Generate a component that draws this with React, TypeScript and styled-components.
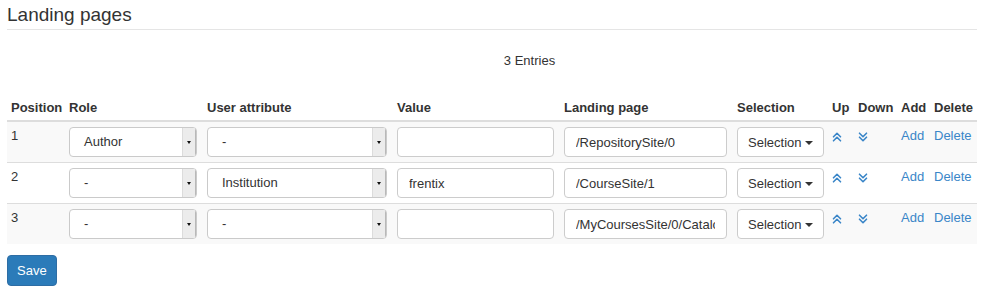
import React from "react";
import styled, { createGlobalStyle } from "styled-components";

type Entry = {
  position: number;
  role: string;
  attribute: string;
  value: string;
  landingPage: string;
};

const entries: Entry[] = [
  { position: 1, role: "Author", attribute: "-", value: "", landingPage: "/RepositorySite/0" },
  { position: 2, role: "-", attribute: "Institution", value: "frentix", landingPage: "/CourseSite/1" },
  { position: 3, role: "-", attribute: "-", value: "", landingPage: "/MyCoursesSite/0/Catalog" },
];

const columns = [
  { label: "Position", width: 58 },
  { label: "Role", width: 138 },
  { label: "User attribute", width: 190 },
  { label: "Value", width: 167 },
  { label: "Landing page", width: 173 },
  { label: "Selection", width: 95 },
  { label: "Up", width: 26 },
  { label: "Down", width: 43 },
  { label: "Add", width: 33 },
  { label: "Delete", width: 47 },
];

const DoubleChevron: React.FC<{ up?: boolean }> = ({ up }) => (
  <svg width="10" height="10" viewBox="0 0 10 10" fill="none">
    <g
      stroke="currentColor"
      strokeWidth="1.6"
      strokeLinecap="round"
      strokeLinejoin="round"
      transform={up ? undefined : "rotate(180 5 5)"}
    >
      <polyline points="1.5,4.8 5,1.3 8.5,4.8" />
      <polyline points="1.5,8.8 5,5.3 8.5,8.8" />
    </g>
  </svg>
);

const App: React.FC = () => {
  return (
    <Page>
      <GlobalStyle />
      <Title>Landing pages</Title>
      <EntryCount>3 Entries</EntryCount>
      <Table>
        <colgroup>
          {columns.map((c) => (
            <col key={c.label} style={{ width: c.width }} />
          ))}
        </colgroup>
        <thead>
          <tr>
            {columns.map((c) => (
              <Th key={c.label}>{c.label}</Th>
            ))}
          </tr>
        </thead>
        <tbody>
          {entries.map((e, i) => (
            <Row key={e.position} $striped={i % 2 === 0}>
              <Td>{e.position}</Td>
              <Td>
                <FakeSelect>
                  <SelectText>{e.role}</SelectText>
                  <SelectArrow />
                </FakeSelect>
              </Td>
              <Td>
                <FakeSelect>
                  <SelectText>{e.attribute}</SelectText>
                  <SelectArrow />
                </FakeSelect>
              </Td>
              <Td>
                <TextInput type="text" defaultValue={e.value} />
              </Td>
              <Td>
                <TextInput type="text" defaultValue={e.landingPage} />
              </Td>
              <Td>
                <DropButton type="button">
                  Selection
                  <Caret />
                </DropButton>
              </Td>
              <Td>
                <IconLink href="#">
                  <DoubleChevron up />
                </IconLink>
              </Td>
              <Td>
                <IconLink href="#">
                  <DoubleChevron />
                </IconLink>
              </Td>
              <Td>
                <Link href="#">Add</Link>
              </Td>
              <Td>
                <Link href="#">Delete</Link>
              </Td>
            </Row>
          ))}
        </tbody>
      </Table>
      <SaveButton type="button">Save</SaveButton>
    </Page>
  );
};

export default App;

const GlobalStyle = createGlobalStyle`
  body {
    margin: 0;
    background: #fff;
    font-family: "Liberation Sans", Arial, Helvetica, sans-serif;
    font-size: 13px;
    line-height: 1.42857;
    color: #333;
  }
  * { box-sizing: border-box; }
`;

const Page = styled.div`
  width: 995px;
  padding: 0 18px 0 7px;
`;

const Title = styled.h3`
  margin: 0;
  padding: 5px 0 3px;
  font-size: 19px;
  font-weight: normal;
  line-height: 1.1;
  color: #333;
  border-bottom: 1px solid #e5e5e5;
`;

const EntryCount = styled.div`
  margin-top: 22px;
  padding-left: 75px;
  text-align: center;
`;

const Table = styled.table`
  margin-top: 22px;
  width: 970px;
  table-layout: fixed;
  border-collapse: collapse;
  border-spacing: 0;
`;

const Th = styled.th`
  padding: 7px 4px 2px;
  text-align: left;
  vertical-align: bottom;
  font-weight: bold;
  white-space: nowrap;
  border-bottom: 2px solid #ddd;
`;

const Row = styled.tr<{ $striped: boolean }>`
  background: ${({ $striped }) => ($striped ? "#f9f9f9" : "#fff")};
`;

const Td = styled.td`
  padding: 5px 4px;
  vertical-align: top;
  border-top: 1px solid #ddd;
  white-space: nowrap;
`;

const FakeSelect = styled.div`
  display: flex;
  width: calc(100% - 2px);
  height: 30px;
  border: 1px solid #cacaca;
  border-radius: 4px;
  background: #fff;
  overflow: hidden;
`;

const SelectText = styled.span`
  flex: 1;
  padding-left: 14px;
  line-height: 28px;
  color: #333;
`;

const SelectArrow = styled.span`
  position: relative;
  width: 14px;
  background: #ececec;
  border-left: 1px solid #dcdcdc;
  border-right: 1px solid #b8b8b8;

  &::after {
    content: "";
    position: absolute;
    left: 4px;
    top: 13px;
    border-left: 2.5px solid transparent;
    border-right: 2.5px solid transparent;
    border-top: 3px solid #111;
  }
`;

const TextInput = styled.input`
  display: block;
  width: calc(100% - 2px);
  height: 30px;
  padding: 0 11px;
  border: 1px solid #ccc;
  border-radius: 4px;
  font-family: inherit;
  font-size: 13px;
  color: #333;
  background: #fff;
  outline: none;
`;

const DropButton = styled.button`
  display: inline-flex;
  align-items: center;
  height: 30px;
  padding: 0 10px;
  border: 1px solid #ccc;
  border-radius: 4px;
  background: #fff;
  font-family: inherit;
  font-size: 13px;
  color: #333;
  cursor: pointer;
`;

const Caret = styled.span`
  display: inline-block;
  margin-left: 4px;
  margin-top: 1px;
  border-left: 4px solid transparent;
  border-right: 4px solid transparent;
  border-top: 4px solid #333;
`;

const IconLink = styled.a`
  display: block;
  width: 10px;
  height: 10px;
  margin-top: 5px;
  color: #3a86c8;

  svg {
    display: block;
  }
`;

const Link = styled.a`
  color: #3a86c8;
  text-decoration: none;
`;

const SaveButton = styled.button`
  display: block;
  margin-top: 11px;
  height: 31px;
  padding: 0 9px;
  border: 1px solid #2e6da4;
  border-radius: 4px;
  background: #2b7bb9;
  color: #fff;
  font-family: inherit;
  font-size: 13px;
  cursor: pointer;
`;
